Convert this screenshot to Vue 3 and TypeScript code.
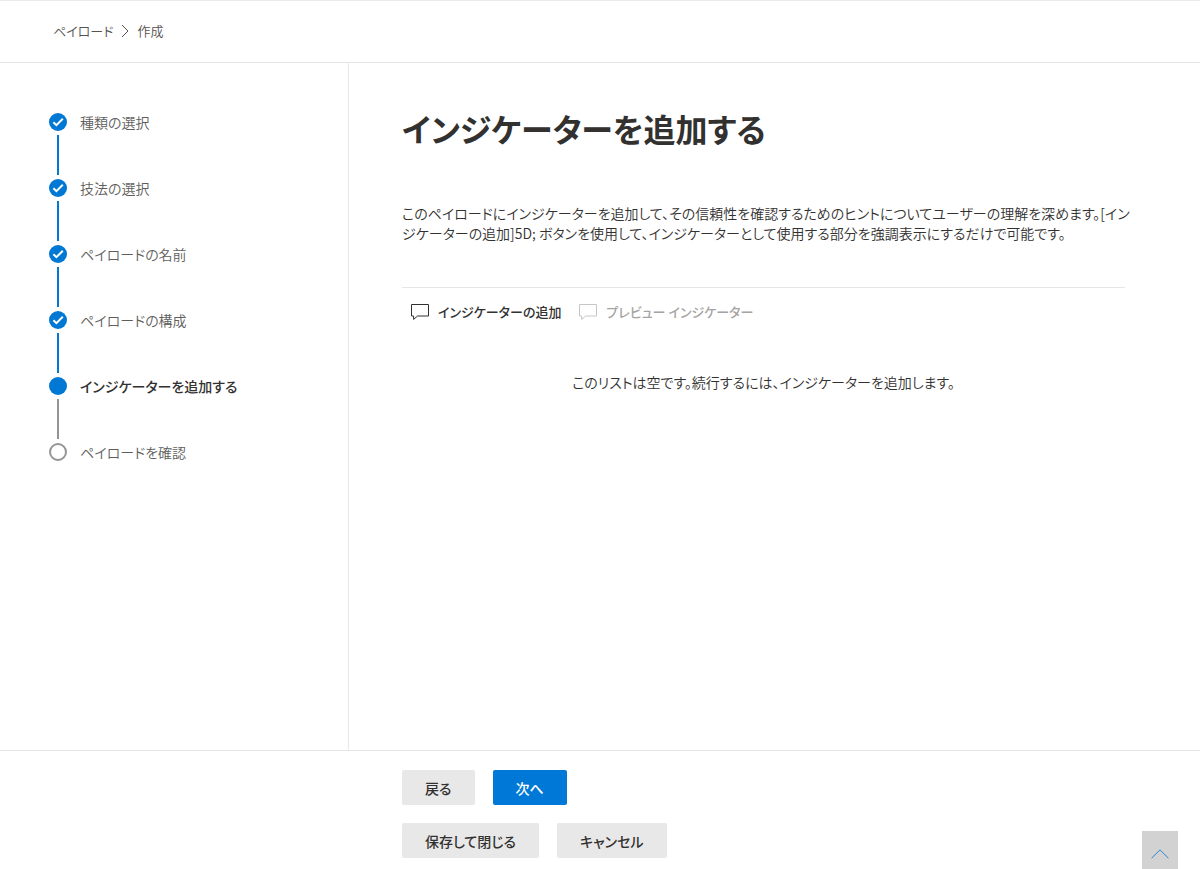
<script setup lang="ts">
type StepState = 'done' | 'current' | 'todo'

interface Step {
  label: string
  state: StepState
}

const steps: Step[] = [
  { label: '種類の選択', state: 'done' },
  { label: '技法の選択', state: 'done' },
  { label: 'ペイロードの名前', state: 'done' },
  { label: 'ペイロードの構成', state: 'done' },
  { label: 'インジケーターを追加する', state: 'current' },
  { label: 'ペイロードを確認', state: 'todo' },
]
</script>

<template>
  <div class="page">
    <nav class="breadcrumb" aria-label="階層">
      <a href="#">ペイロード</a>
      <svg class="chevron" viewBox="0 0 8 14" aria-hidden="true">
        <path d="M1 1 L7 7 L1 13" />
      </svg>
      <span>作成</span>
    </nav>

    <div class="body">
      <aside class="sidebar">
        <ol class="steps">
          <li v-for="step in steps" :key="step.label" class="step" :class="step.state">
            <span class="marker">
              <svg v-if="step.state === 'done'" viewBox="0 0 18 18" aria-hidden="true">
                <path d="M4.4 9.2 L7.4 12.2 L13.8 5.8" />
              </svg>
            </span>
            <span class="label">{{ step.label }}</span>
          </li>
        </ol>
      </aside>

      <main class="content">
        <h1>インジケーターを追加する</h1>
        <p class="description">このペイロードにインジケーターを追加して、その信頼性を確認するためのヒントについてユーザーの理解を深めます。[インジケーターの追加]5D; ボタンを使用して、インジケーターとして使用する部分を強調表示にするだけで可能です。</p>
        <div class="toolbar">
          <button type="button" class="command">
            <svg viewBox="0 0 20 18" aria-hidden="true">
              <path d="M1.5 1.5 H18.5 V13 H7.5 L3.6 16.4 V13 H1.5 Z" />
            </svg>
            インジケーターの追加
          </button>
          <button type="button" class="command" disabled>
            <svg viewBox="0 0 20 18" aria-hidden="true">
              <path d="M1.5 1.5 H18.5 V13 H7.5 L3.6 16.4 V13 H1.5 Z" />
            </svg>
            プレビュー インジケーター
          </button>
        </div>
        <p class="empty">このリストは空です。続行するには、インジケーターを追加します。</p>
      </main>
    </div>

    <footer class="footer">
      <div class="row">
        <button type="button" class="button">戻る</button>
        <button type="button" class="button primary">次へ</button>
      </div>
      <div class="row">
        <button type="button" class="button">保存して閉じる</button>
        <button type="button" class="button">キャンセル</button>
      </div>
    </footer>

    <button type="button" class="to-top" aria-label="トップへ戻る">
      <svg viewBox="0 0 18 10" aria-hidden="true">
        <path d="M0.6 9.2 L9 0.9 L17.4 9.2" />
      </svg>
    </button>
  </div>
</template>

<style>
body {
  margin: 0;
}
</style>

<style scoped>
.page {
  box-sizing: border-box;
  display: flex;
  flex-direction: column;
  min-height: 100vh;
  border-top: 1px solid #eaeaea;
  background: #fff;
  color: #323130;
  font-family: "Noto Sans CJK JP", sans-serif;
  font-size: 14px;
  font-weight: 350;
  line-height: 20px;
  font-feature-settings: "palt";
}

button {
  font: inherit;
  font-feature-settings: inherit;
  color: inherit;
  border: 0;
  cursor: pointer;
}

svg {
  fill: none;
  stroke: currentColor;
}

.breadcrumb {
  display: flex;
  align-items: center;
  padding: 20px 53px 21px;
  gap: 8px;
  border-bottom: 1px solid #e6e6e6;
  color: #55524f;
  font-size: 13px;
}

.breadcrumb a {
  color: inherit;
  text-decoration: none;
}

.chevron {
  width: 8px;
  height: 14px;
}

.body {
  flex: 1;
  display: flex;
}

.sidebar {
  box-sizing: border-box;
  flex: 0 0 349px;
  padding: 49px;
  border-right: 1px solid #e8e8e8;
}

.steps {
  display: flex;
  flex-direction: column;
  gap: 46px;
  margin: 0;
  padding: 0;
  list-style: none;
}

.step {
  position: relative;
  display: flex;
  align-items: center;
  gap: 13px;
  color: #605e5c;
}

.step:not(:last-child)::after {
  content: "";
  position: absolute;
  left: 8px;
  top: 23px;
  width: 2px;
  height: 40px;
  background: #0078d4;
}

.step.current:not(:last-child)::after {
  background: #979593;
}

.marker {
  box-sizing: border-box;
  flex: none;
  width: 18px;
  height: 18px;
  border-radius: 50%;
  background: #0078d4;
  color: #fff;
}

.marker svg {
  display: block;
  stroke-width: 2;
}

.todo .marker {
  border: 2px solid #979593;
  background: #fff;
}

.current .label {
  color: #323130;
  font-weight: 500;
}

.content {
  flex: 1;
  min-width: 0;
  padding: 40px 75px 40px 53px;
}

h1 {
  margin: 0;
  font-size: 32px;
  font-weight: 700;
  line-height: 50px;
}

.description {
  margin: 50px -8px 44px 0;
}

.toolbar {
  display: flex;
  gap: 17px;
  padding: 14px 8px;
  border-top: 1px solid #e6e6e6;
}

.command {
  display: flex;
  align-items: center;
  gap: 8px;
  padding: 0;
  background: none;
  font-size: 13px;
  font-weight: 500;
}

.command svg {
  width: 20px;
  height: 18px;
}

.command:disabled {
  color: #a6a4a2;
  cursor: default;
}

.command:disabled svg {
  color: #c8c6c4;
}

.empty {
  margin: 36px 0 0;
  text-align: center;
}

.footer {
  display: flex;
  flex-direction: column;
  gap: 18px;
  padding: 19px 75px 11px 402px;
  border-top: 1px solid #e6e6e6;
}

.row {
  display: flex;
  gap: 18px;
}

.button {
  height: 35px;
  padding: 0 23px;
  border-radius: 2px;
  background: #e8e8e8;
  font-weight: 500;
}

.primary {
  background: #0078d7;
  color: #fff;
}

.to-top {
  position: fixed;
  right: 22px;
  bottom: 0;
  width: 36px;
  height: 38px;
  padding: 6px 0 0;
  background: #d2d2d2;
  color: #2a84d8;
}

.to-top svg {
  width: 18px;
  height: 10px;
}
</style>
